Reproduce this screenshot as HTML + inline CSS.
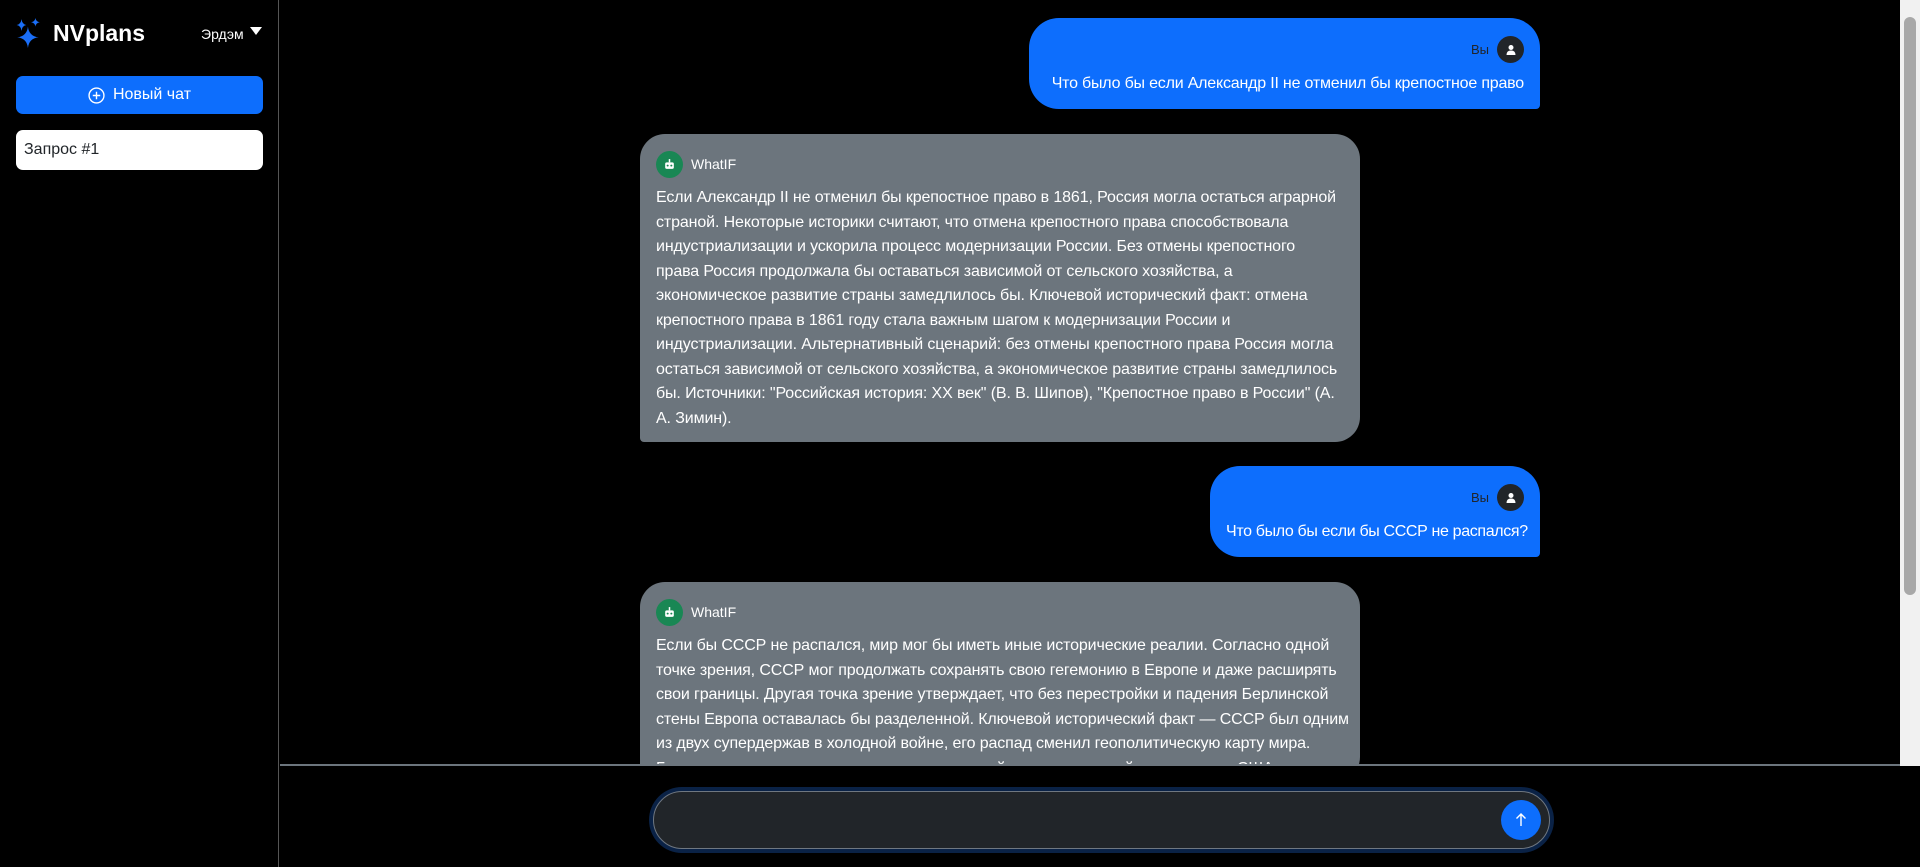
<!DOCTYPE html>
<html><head><meta charset="utf-8"><style>
*{box-sizing:border-box;margin:0;padding:0}
html,body{overflow:hidden}
body{width:1920px;height:867px;background:#000;font-family:"Liberation Sans","DejaVu Sans",sans-serif;color:#fff;position:relative}
.side{position:absolute;left:0;top:0;width:279px;height:867px;border-right:1px solid #555}
.logo{position:absolute;left:53px;top:20px;font-size:23px;font-weight:bold;color:#fff}
.user{position:absolute;left:201px;top:26px;font-size:14px;color:#fff}
.caret{position:absolute;left:250px;top:27px;width:0;height:0;border-left:6px solid transparent;border-right:6px solid transparent;border-top:8px solid #fff}
.newbtn{position:absolute;left:16px;top:76px;width:247px;height:38px;background:#0d6efd;border-radius:7px;font-size:16px;display:flex;align-items:center;justify-content:center;gap:8px}
.q{position:absolute;left:16px;top:130px;width:247px;height:40px;background:#fff;border-radius:7px;color:#212529;font-size:16px;padding:11px 8px}
.main{position:absolute;left:280px;top:0;width:1620px;height:766px;overflow:hidden;border-bottom:2px solid #6c757d}
.ub{position:absolute;background:#0d6efd;border-radius:30px 30px 4px 30px;text-align:right;padding:0 16px}
.ub .h{display:flex;justify-content:flex-end;align-items:center;gap:8px;font-size:13px;color:#212529;margin-top:18px}
.av{width:27px;height:27px;border-radius:50%;background:#212529;display:flex;align-items:center;justify-content:center}
.ub .t{font-size:16px;margin-top:12px;letter-spacing:-0.2px;white-space:nowrap}
.ab{position:absolute;left:360px;width:720px;background:#6c757d;border-radius:25px 25px 25px 4px;padding:16px 16px}
.ab .h{display:flex;align-items:center;gap:8px;font-size:14px;height:28px}
.gv{width:27px;height:27px;border-radius:50%;background:#198754;display:flex;align-items:center;justify-content:center}
.ab .t{font-size:16px;line-height:24.5px;margin-top:8px;letter-spacing:-0.12px;white-space:nowrap}
.sb{position:absolute;left:1900px;top:0;width:20px;height:766px;background:#f1f1f1}
.thumb{position:absolute;left:4px;top:17px;width:12px;height:578px;background:#a8a8a8;border-radius:6px}
.inp{position:absolute;left:649px;top:787px;width:905px;height:66px;border-radius:33px;background:#0a2246}
.inp .in{position:absolute;left:4px;top:4px;right:4px;bottom:4px;border-radius:29px;background:#212529;border:1px solid #6f7780}
.send{position:absolute;left:1501px;top:800px;width:40px;height:40px;border-radius:50%;background:#0d6efd;display:flex;align-items:center;justify-content:center}
</style></head><body>
<div class="side">
<svg style="position:absolute;left:16px;top:18px" width="26" height="30" viewBox="0 0 24 28"><path fill="#1a6ef7" d="M11 8 Q12 17 21 18 Q12 19 11 28 Q10 19 1 18 Q10 17 11 8Z M5 1 Q5.6 5.8 9.5 6.5 Q5.6 7.2 5 12 Q4.4 7.2 0.5 6.5 Q4.4 5.8 5 1Z M18 0 Q18.5 3.4 22 4 Q18.5 4.6 18 8 Q17.5 4.6 14 4 Q17.5 3.4 18 0Z"/></svg>
<div class="logo">NVplans</div>
<div class="user">Эрдэм</div><div class="caret"></div>
<div class="newbtn"><svg width="17" height="17" viewBox="0 0 16 16"><circle cx="8" cy="8" r="7" fill="none" stroke="#fff" stroke-width="1.3"/><path d="M8 4.5v7M4.5 8h7" stroke="#fff" stroke-width="1.3"/></svg>Новый чат</div>
<div class="q">Запрос #1</div>
</div>
<div class="main">
<div class="ub" style="left:749px;top:18px;width:511px;height:91px">
<div class="h">Вы<div class="av"><svg width="12" height="12" viewBox="0 0 12 12"><circle cx="6" cy="3.5" r="2.5" fill="#fff"/><path d="M1.5 11 Q1.5 6.5 6 6.5 Q10.5 6.5 10.5 11Z" fill="#fff"/></svg></div></div>
<div class="t">Что было бы если Александр II не отменил бы крепостное право</div></div>
<div class="ab" style="top:134px;height:308px">
<div class="h"><div class="gv"><svg width="13" height="13" viewBox="0 0 12 12"><rect x="2" y="4" width="8" height="6" rx="1.5" fill="#fff"/><rect x="5.3" y="1" width="1.4" height="3" fill="#fff"/><circle cx="4.3" cy="7" r="0.9" fill="#198754"/><circle cx="7.7" cy="7" r="0.9" fill="#198754"/></svg></div>WhatIF</div>
<div class="t">Если Александр II не отменил бы крепостное право в 1861, Россия могла остаться аграрной<br>страной. Некоторые историки считают, что отмена крепостного права способствовала<br>индустриализации и ускорила процесс модернизации России. Без отмены крепостного<br>права Россия продолжала бы оставаться зависимой от сельского хозяйства, а<br>экономическое развитие страны замедлилось бы. Ключевой исторический факт: отмена<br>крепостного права в 1861 году стала важным шагом к модернизации России и<br>индустриализации. Альтернативный сценарий: без отмены крепостного права Россия могла<br>остаться зависимой от сельского хозяйства, а экономическое развитие страны замедлилось<br>бы. Источники: "Российская история: XX век" (В. В. Шипов), "Крепостное право в России" (А.<br>А. Зимин).</div></div>
<div class="ub" style="left:930px;top:466px;width:330px;height:91px">
<div class="h">Вы<div class="av"><svg width="12" height="12" viewBox="0 0 12 12"><circle cx="6" cy="3.5" r="2.5" fill="#fff"/><path d="M1.5 11 Q1.5 6.5 6 6.5 Q10.5 6.5 10.5 11Z" fill="#fff"/></svg></div></div>
<div class="t" style="letter-spacing:-0.35px">Что было бы если бы СССР не распался?</div></div>
<div class="ab" style="top:582px;height:200px">
<div class="h"><div class="gv"><svg width="13" height="13" viewBox="0 0 12 12"><rect x="2" y="4" width="8" height="6" rx="1.5" fill="#fff"/><rect x="5.3" y="1" width="1.4" height="3" fill="#fff"/><circle cx="4.3" cy="7" r="0.9" fill="#198754"/><circle cx="7.7" cy="7" r="0.9" fill="#198754"/></svg></div>WhatIF</div>
<div class="t">Если бы СССР не распался, мир мог бы иметь иные исторические реалии. Согласно одной<br>точке зрения, СССР мог продолжать сохранять свою гегемонию в Европе и даже расширять<br>свои границы. Другая точка зрение утверждает, что без перестройки и падения Берлинской<br>стены Европа оставалась бы разделенной. Ключевой исторический факт — СССР был одним<br>из двух супердержав в холодной войне, его распад сменил геополитическую карту мира.<br>Главное последствие — концентрация военной и экономической силы в руках США, что</div></div>
</div>
<div class="sb"><div class="thumb"></div></div>
<div class="inp"><div class="in"></div></div>
<div class="send"><svg width="14" height="16" viewBox="0 0 14 16"><path d="M7 14V2M2.5 6.5 7 2l4.5 4.5" fill="none" stroke="#fff" stroke-width="1.4"/></svg></div>
</body></html>
